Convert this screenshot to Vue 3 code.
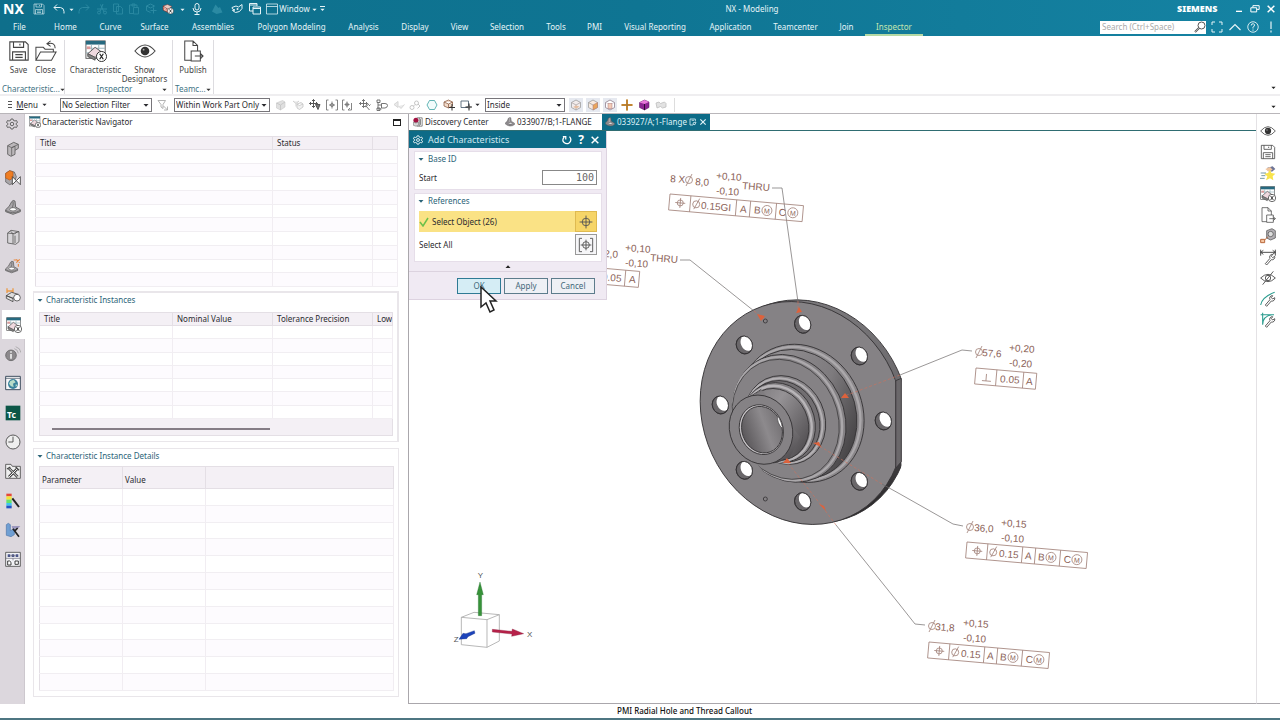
<script setup>
import { ref } from 'vue'

const menuTabs = ['File', 'Home', 'Curve', 'Surface', 'Assemblies', 'Polygon Modeling', 'Analysis', 'Display', 'View', 'Selection', 'Tools', 'PMI', 'Visual Reporting', 'Application', 'Teamcenter', 'Join', 'Inspector']

const quick = [
  { icon: 'save', label: 'Save' },
  { icon: 'undo', label: 'Undo' },
  { icon: 'caret', label: 'Undo list' },
  { icon: 'redo', label: 'Redo', off: true },
  { icon: 'cut', label: 'Cut', off: true },
  { icon: 'copy', label: 'Copy', off: true },
  { icon: 'paste', label: 'Paste', off: true },
  { icon: 'pick', label: 'Repeat', off: true },
  { icon: 'charmini', label: 'Characteristic' },
  { icon: 'caret', label: 'Recent commands' },
  { icon: 'mic', label: 'Voice command' },
  { icon: 'solid', label: 'Shape', off: true },
  { icon: 'touch', label: 'Touch mode' },
  { icon: 'cascade', label: 'Cascade' },
  { icon: 'window', label: 'Window layout' },
]

const pickTools = ['cube', 'cubesel', 'snap', 'bracket', 'bracketsnap', 'chain', 'tree', 'point', 'link', 'hex', 'boxsnap', 'rectsnap']
const pickOff = ['cube', 'cubesel', 'point', 'link']

const resources = ['block', 'constraint', 'flange', 'book', 'flangeplus', 'measure', 'char', 'info', 'globe', 'tc', 'clock', 'tools', 'rainbow', 'machine', 'process']
const rightTools = ['eye', 'save', 'star', 'char', 'publish', 'callout', 'dimwrench', 'eyeoff', 'curvewrench', 'sketchwrench']

const filter = ref('No Selection Filter')
const scope = ref('Within Work Part Only')
const inside = ref('Inside')
const start = ref('100')

const holes = [[338, 103], [508, 198], [580, 393], [508, 574], [338, 635], [163, 541], [91, 345], [163, 165]]

const frames = [
  { x: 670, y: 194, w: 134, cuts: [21, 67, 81, 107], sym: 'pos', dia: 24, texts: [[32, '0.15GI'], [71, 'A'], [85, 'B'], [110, 'C']], mods: [98, 124] },
  { x: 566, y: 265, w: 74, cuts: [21, 60], sym: 'pos', texts: [[37, '0.05'], [64, 'A']], mods: [] },
  { x: 976, y: 368, w: 61, cuts: [21, 48], sym: 'perp', texts: [[25, '0.05'], [51, 'A']], mods: [] },
  { x: 967, y: 542, w: 121, cuts: [21, 56, 69, 94], sym: 'pos', dia: 24, texts: [[33, '0.15'], [59, 'A'], [72, 'B'], [98, 'C']], mods: [85, 111] },
  { x: 929, y: 642, w: 121, cuts: [21, 56, 69, 94], sym: 'pos', dia: 24, texts: [[33, '0.15'], [59, 'A'], [72, 'B'], [98, 'C']], mods: [85, 111] },
]

const notes = [
  [670, 182, '8 X'], [695, 185, '8,0'], [716, 179, '+0,10'], [716, 194, '-0,10'], [742, 189, 'THRU'],
  [604, 257, '2,0'], [625, 251, '+0,10'], [625, 266, '-0,10'], [650, 261, 'THRU'],
  [982, 356, '57,6'], [1009, 351, '+0,20'], [1009, 366, '-0,20'],
  [974, 531, '36,0'], [1001, 526, '+0,15'], [1001, 541, '-0,10'],
  [935, 630, '31,8'], [963, 626, '+0,15'], [963, 641, '-0,10'],
]
const diameters = [[689, 180], [979, 352], [970, 527], [932, 626]]
</script>

<template>
  <div class="app">
    <svg class="defs" aria-hidden="true">
      <defs>
        <g id="wrench"><path d="M8 21L15 13a4 4 0 0 1 4-6l-2 3 2 2 3-2a4 4 0 0 1-5 5L10 23z" fill="#fff" stroke="#444" stroke-width="1.3" /></g>
        <g id="cross4"><path d="M12 4v16M4 12h16M9 7l3-3 3 3M9 17l3 3 3-3M7 9l-3 3 3 3M17 9l3 3-3 3" /></g>
        <symbol id="i-save" viewBox="0 0 24 24"><path d="M2 2h17l3 3v17H2zM6 2v6h11V2M13 4v2M5 22v-9h14v9M8 16h8M8 19h8" fill="none" stroke="currentColor" stroke-width="1.2" /></symbol>
        <symbol id="i-folder" viewBox="0 0 24 24"><path d="M1 22V8h8l2 2h9v3M1 22l5-9h17l-5 9zM22 9c0-5-3-6-8-5M17 1l-4 3 4 3" fill="none" stroke="currentColor" stroke-width="1.1" /></symbol>
        <symbol id="i-char" viewBox="0 0 24 24"><rect x="1" y="1" width="21" height="19" fill="#fff" stroke="#555" /><path d="M1 1h21v4H1z" fill="#276a80" /><path d="M1 9h21M1 14h21M7 5v15M15 5v15" stroke="#96b2bb" /><path d="M3 15l8-7 7 5-7 6z" fill="#efd9df" stroke="#555" /><path d="M3 15v3l8 4v-3z" fill="#888" stroke="#555" /><path d="M2 7h4v3H2z" fill="#d99" /><circle cx="18" cy="18" r="5.5" fill="#fff" stroke="#222" /><path d="M16 15l4 6M20 15l-4 6" stroke="#222" stroke-width="1.3" /></symbol>
        <symbol id="i-charmini" viewBox="0 0 24 24"><path d="M2 6l9-3 9 4-8 6z" fill="#e9c9c0" stroke="#733" /><path d="M2 6v8l10 5v-6z" fill="#c8563f" stroke="#733" /><path d="M3 9l9 5M3 12l9 5M6 7v9" stroke="#fff" /><circle cx="17" cy="16" r="6" fill="#fff" stroke="#222" /><path d="M15 13l4 6M19 13l-4 6" stroke="#222" stroke-width="1.6" /></symbol>
        <symbol id="i-eye" viewBox="0 0 24 24"><path d="M1 12Q12-1 23 12Q12 25 1 12z" fill="#fff" stroke="#444" stroke-width="1.2" /><circle cx="12" cy="12" r="4.7" fill="#333" /><circle cx="10.5" cy="10.5" r="1" fill="#aaa" /></symbol>
        <symbol id="i-eyeoff" viewBox="0 0 24 24"><path d="M1 12Q12 1 23 12Q12 23 1 12zM20 2L4 22" fill="none" stroke="#444" stroke-width="1.3" /><circle cx="12" cy="12" r="4" fill="none" stroke="#444" stroke-width="1.3" /></symbol>
        <symbol id="i-publish" viewBox="0 0 24 24"><path d="M10 22H3V1h9l5 5v6M12 1v5h5M10 12h10v11H10zM14 17.5h9M20 14.500l3 3-3 3" fill="none" stroke="currentColor" stroke-width="1.1" /></symbol>
        <symbol id="i-undo" viewBox="0 0 24 24"><path d="M8 3L2 9l6 6M2 9h13q7 1 7 8v4" fill="none" stroke="currentColor" stroke-width="2" /></symbol>
        <symbol id="i-redo" viewBox="0 0 24 24"><path d="M16 3l6 6-6 6M22 9H9q-7 1-7 8v4" fill="none" stroke="currentColor" stroke-width="2" /></symbol>
        <symbol id="i-caret" viewBox="0 0 24 24"><path d="M2 8h20L12 19z" fill="currentColor" /></symbol>
        <symbol id="i-cut" viewBox="0 0 24 24"><path d="M14 2L8 17M9 3l7 15M2 12h20" fill="none" stroke="currentColor" stroke-width="2" /><circle cx="6" cy="19" r="3" fill="none" stroke="currentColor" stroke-width="2" /><circle cx="18" cy="19" r="3" fill="none" stroke="currentColor" stroke-width="2" /></symbol>
        <symbol id="i-copy" viewBox="0 0 24 24"><path d="M3 2h10v15H3zM9 7h8l4 4v11H9z" fill="none" stroke="currentColor" stroke-width="1.8" /></symbol>
        <symbol id="i-paste" viewBox="0 0 24 24"><path d="M3 4h15v5M3 4v17h7M8 2h6v4H8zM11 9h10v13H11z" fill="none" stroke="currentColor" stroke-width="1.8" /></symbol>
        <symbol id="i-pick" viewBox="0 0 24 24"><path d="M3 6l8-4 8 4-8 4zM3 6v9l8 4M17 9v12M11 15h12" fill="none" stroke="currentColor" stroke-width="2" /></symbol>
        <symbol id="i-mic" viewBox="0 0 24 24"><rect x="8" y="1" width="8" height="13" rx="4" fill="none" stroke="currentColor" stroke-width="2" /><path d="M4 10q0 8 8 8t8-8M12 18v5M7 23h10" fill="none" stroke="currentColor" stroke-width="2" /></symbol>
        <symbol id="i-solid" viewBox="0 0 24 24"><path d="M2 17L9 3l6 7 3-2 5 11-12 3z" fill="currentColor" /></symbol>
        <symbol id="i-touch" viewBox="0 0 24 24"><path d="M2 9l8-3 5 2 7-5v8l-5 6-8 2-6-4 5-1-5-2z" fill="none" stroke="currentColor" stroke-width="2" /><circle cx="13" cy="12" r="2" fill="currentColor" /></symbol>
        <symbol id="i-cascade" viewBox="0 0 24 24"><path d="M8 16H1V1h15v5M8 8h15v14H8zM8 11h15M1 4h15" fill="none" stroke="currentColor" stroke-width="2" /></symbol>
        <symbol id="i-window" viewBox="0 0 24 24"><path d="M1 2h22v20H1zM1 7h22" fill="none" stroke="currentColor" stroke-width="1.5" /></symbol>
        <symbol id="i-funnel" viewBox="0 0 24 24"><path d="M2 3h15l-5 8v8l-4-3v-5zM13 14l8 8M21 15v7h-7" fill="none" stroke="#aaa" stroke-width="1.8" /></symbol>
        <symbol id="i-cube" viewBox="0 0 24 24"><path d="M3 8l12-5 5 3v10l-9 6-8-4z" fill="#ccc" stroke="#999" /><path d="M3 8l8 4 9-6M11 12v10" fill="none" stroke="#999" stroke-width="1.5" /></symbol>
        <symbol id="i-cubesel" viewBox="0 0 24 24"><path d="M2 4l6 5 6-5M8 9v6M10 10l8-3 4 3v6l-7 5-5-3zM10 10l5 3 7-3" fill="#e8e8e8" stroke="#999" stroke-width="1.5" /></symbol>
        <symbol id="i-snap" viewBox="0 0 24 24"><g fill="none" stroke="#555" stroke-width="2"><use href="#cross4" x="-3" y="-3" /><path d="M13 11h9l-4 10z" fill="#777" /></g></symbol>
        <symbol id="i-bracket" viewBox="0 0 24 24"><g fill="none" stroke="#777" stroke-width="1.8"><path d="M5 2H1v20h4M19 2h4v20h-4M12 5v14M6 12h12" /><circle cx="12" cy="12" r="3" /></g></symbol>
        <symbol id="i-bracketsnap" viewBox="0 0 24 24"><g fill="none" stroke="#777" stroke-width="1.8"><path d="M5 2H1v20h4M10 5v12M5 11h10M19 8v14h-7M16 18l-4 4" /><circle cx="10" cy="11" r="3" /></g></symbol>
        <symbol id="i-chain" viewBox="0 0 24 24"><g fill="none" stroke="#666" stroke-width="1.8"><use href="#cross4" x="-3" y="-3" /><path d="M12 16l8-6M13 13l8 9M20 14l3-3" /></g></symbol>
        <symbol id="i-tree" viewBox="0 0 24 24"><path d="M2 2h6v5H2zM4 7v13h7M4 12h7M11 9h7q5 0 5 4t-5 5h-7zM2 18h6v5H2z" fill="none" stroke="#666" stroke-width="1.8" /></symbol>
        <symbol id="i-point" viewBox="0 0 24 24"><path d="M2 11l8-6v12zM11 14l5 5 7-8" fill="#ddd" stroke="#bbb" stroke-width="2" /></symbol>
        <symbol id="i-link" viewBox="0 0 24 24"><g fill="none" stroke="#999" stroke-width="1.8"><circle cx="6" cy="17" r="4" /><circle cx="15" cy="8" r="4" /><path d="M9 14l3-3M18 10l4 4-5 5" /></g></symbol>
        <symbol id="i-hex" viewBox="0 0 24 24"><path d="M7 3h10l5 9-5 9H7l-5-9z" fill="#f2fcfc" stroke="#319c9c" stroke-width="1.5" /></symbol>
        <symbol id="i-boxsnap" viewBox="0 0 24 24"><path d="M2 6l9-4 8 4v8l-8 4-9-4zM2 6l9 4 8-4M11 10v8" fill="#f2dccb" stroke="#8a5a40" stroke-width="1.5" /><path d="M18 10v13M12 17h12" stroke="#333" stroke-width="2" /></symbol>
        <symbol id="i-rectsnap" viewBox="0 0 24 24"><path d="M2 4h15v13H2z" fill="none" stroke="#567" stroke-width="1.8" /><path d="M18 9v14M11 16h13" stroke="#222" stroke-width="2" /><circle cx="18" cy="16" r="3" fill="#555" /></symbol>
        <symbol id="i-facebox" viewBox="0 0 24 24"><path d="M3 7l9-5 9 5v10l-9 5-9-5z" fill="#f2ecec" stroke="#999" stroke-width="1.5" /><path d="M3 7l9 5 9-5M12 12v10" fill="none" stroke="#a9a1a1" stroke-width="1.5" /><path d="M6 16l6-3 7 2-6 4z" fill="#e5bda0" /></symbol>
        <symbol id="i-facebox2" viewBox="0 0 24 24"><path d="M3 7l9-5 9 5v10l-9 5-9-5zM3 7l9 5" fill="#f7e9df" stroke="#999" stroke-width="1.5" /><path d="M12 12l9-5v10l-9 5z" fill="#e9a55c" stroke="#a77" /></symbol>
        <symbol id="i-facebox3" viewBox="0 0 24 24"><path d="M3 7l9-5 9 5v10l-9 5-9-5z" fill="#fff" stroke="#8a7a8a" stroke-width="1.5" /><path d="M3 7l9 4 9-4M12 11v11" fill="none" stroke="#b5a9b5" /><path d="M8 9h8v10H8z" fill="#f3cbb8" stroke="#a77" /></symbol>
        <symbol id="i-plus" viewBox="0 0 24 24"><path d="M12 1v22M1 12h22" stroke="#e0952d" stroke-width="4" /><path d="M12 1v22M1 12h22" stroke="#654" stroke-width="1" /></symbol>
        <symbol id="i-purple" viewBox="0 0 24 24"><path d="M3 7l10-5 9 4v11l-9 5-10-5z" fill="#8d2493" stroke="#541158" /><path d="M3 7l10 3 9-4-9-4z" fill="#e77ad9" /><path d="M13 10v12" stroke="#2f0a33" stroke-width="2" /></symbol>
        <symbol id="i-faint" viewBox="0 0 24 24"><path d="M2 8l6-2 3 3 8-3 3 3v7l-7 2-4-3-7 3z" fill="#e2e2e2" stroke="#bbb" stroke-width="1.5" /></symbol>
        <symbol id="i-gear" viewBox="0 0 24 24"><path d="M10 2h4l1 3 3 1 3-1 2 4-3 2v2l3 2-2 4-3-1-3 1-1 3h-4l-1-3-3-1-3 1-2-4 3-2v-2L1 9l2-4 3 1 3-1z" fill="none" stroke="currentColor" stroke-width="2" /><circle cx="12" cy="12" r="3.5" fill="none" stroke="currentColor" stroke-width="2" /></symbol>
        <symbol id="i-block" viewBox="0 0 24 24"><path d="M4 7l9-5 7 3v6l-5 3v6l-6 3-5-3z" fill="#bbb7ba" stroke="#555" stroke-width="1.2" /><path d="M4 7l6 3 10-5M10 10v12M10 10l5-2v6" fill="none" stroke="#555" /></symbol>
        <symbol id="i-constraint" viewBox="0 0 24 24"><path d="M1 5l6-4 7 2 3 7-3 9-7 3-6-4z" fill="#a9a6a9" stroke="#555" /><path d="M1 5l6-4 5 2v9l-5 3-6-3z" fill="#ef7d22" stroke="#b5581a" /><path d="M11 10l6 6 6-6v12l-6-6-6 6z" fill="#fff" stroke="#333" stroke-width="1.2" /></symbol>
        <symbol id="i-flange" viewBox="0 0 24 24"><path d="M1 16Q7 12 10 4q2-3 5-1l1 9 7 4v3l-11 4-11-4z" fill="#aaa7aa" stroke="#555" stroke-width="1.2" /><ellipse cx="12" cy="15.5" rx="5" ry="2.500" fill="#fff" stroke="#555" /><path d="M12 4q1 4-1 9M1 17q10 7 22 0" fill="none" stroke="#555" /></symbol>
        <symbol id="i-book" viewBox="0 0 24 24"><path d="M4 6l5-4 12 2v15l-5 4-12-2zM4 6l8 1 9-3M12 7v15M8 3l4 4M14 8l4-4M15 10v11" fill="#d7d5d8" stroke="#555" stroke-width="1.2" /></symbol>
        <symbol id="i-flangeplus" viewBox="0 0 24 24"><use href="#i-flange" y="2" width="20" height="22" /><path d="M17 2l5 5M22 2l-5 5M13 3h4M20 9v4" stroke="#e8873c" stroke-width="1.6" /></symbol>
        <symbol id="i-measure" viewBox="0 0 24 24"><path d="M2 6h10M3 2v7M12 2v7" stroke="#eb9b47" stroke-width="2" /><path d="M2 13l8-5 10 3-8 6zM2 13v4l10 5v-5z" fill="#ddd" stroke="#444" stroke-width="1.2" /><circle cx="18" cy="16" r="5" fill="#fff" stroke="#444" stroke-width="1.2" /></symbol>
        <symbol id="i-info" viewBox="0 0 24 24"><circle cx="9" cy="14" r="8" fill="#8c898c" stroke="#555" /><path d="M9 12v7M9 8v2" stroke="#ddd" stroke-width="3" /><path d="M14 4q5 1 6 7M16 1q7 2 8 9" fill="none" stroke="#999" /></symbol>
        <symbol id="i-globe" viewBox="0 0 24 24"><path d="M1 2h22v20H1z" fill="#f7f7f9" stroke="#345" stroke-width="1.4" /><path d="M1 5h22" stroke="#345" /><circle cx="12" cy="13.5" r="7.5" fill="#39819b" /><path d="M8 9l5-2 3 4-4 2 1 5-4-1-3-4zM16 14l3 1-3 3z" fill="#b7dcc8" /></symbol>
        <symbol id="i-tc" viewBox="0 0 24 24"><path d="M1 1h22v22H1z" fill="#0c5647" /><text x="3" y="20" fill="#fff" font-family="Noto Sans, sans-serif" font-weight="700" font-size="13">Tc</text></symbol>
        <symbol id="i-clock" viewBox="0 0 24 24"><circle cx="12" cy="12" r="10.5" fill="#eee" stroke="#444" stroke-width="1.3" /><path d="M12 4v8H5" fill="none" stroke="#444" stroke-width="1.3" /></symbol>
        <symbol id="i-tools" viewBox="0 0 24 24"><path d="M1 2h8l2 3h12v18H1z" fill="#eee" stroke="#444" stroke-width="1.2" /><path d="M6 8l13 13M18 9L6 21" stroke="#444" stroke-width="4" /><path d="M6 8l13 13M18 9L6 21" stroke="#eee" stroke-width="1.5" /><path d="M3 9l5-3M16 6l5 5" stroke="#444" stroke-width="2" /></symbol>
        <symbol id="i-rainbow" viewBox="0 0 24 24"><path d="M2 1h8v4H2z" fill="#e5483a" /><path d="M2 5h8v5H2z" fill="#f4e43b" /><path d="M2 10h8v5H2z" fill="#67e36b" /><path d="M2 15h8v4H2z" fill="#3bc6ee" /><path d="M2 19h8v4H2z" fill="#2453c4" /><path d="M11 8l10 13" stroke="#222" stroke-width="3" /></symbol>
        <symbol id="i-machine" viewBox="0 0 24 24"><path d="M2 4l3-2 3 2v9l6-3v9l-5 3-7-2z" fill="#6f9fd3" stroke="#4f76a9" /><path d="M10 6h13l-4 4h-8z" fill="#9d98bf" /><path d="M12 10l9 12M19 9l-5 5" stroke="#222" stroke-width="2.5" /></symbol>
        <symbol id="i-process" viewBox="0 0 24 24"><path d="M1 2h22v21H1z" fill="#f3f3f6" stroke="#444" stroke-width="1.2" /><path d="M4 5h4v4H4zM10 5h4v4h-4zM16 5h4v4h-4z" fill="#4c5689" /><path d="M1 11h22M8 7h8M12 11v3" stroke="#667" /><path d="M4 15h3l2 2v4H4zM15 15h5v5h-5z" fill="#fff" stroke="#333" stroke-width="1.4" /></symbol>
        <symbol id="i-star" viewBox="0 0 24 24"><path d="M11 4l8-2 4 4-5 4-7-2z" fill="#6d7495" /><path d="M8 6l7-3 4 4-6 3z" fill="#efc5a0" /><path d="M15 7l2 5 6 1-4 4 1 6-5-3-6 3 2-6-5-4 6-1z" fill="#f8e34c" /><path d="M1 12h8M2 16h6M0 20h7" stroke="#7798a4" stroke-width="1.5" /></symbol>
        <symbol id="i-callout" viewBox="0 0 24 24"><path d="M10 4l8-3 5 3v11l-7 3-6-3z" fill="#b3b0b5" stroke="#444" /><circle cx="16" cy="9" r="4" fill="#ddd" stroke="#444" /><path d="M1 17h6v5H1zM7 18l5-5" fill="#f5c7a3" stroke="#b8683c" stroke-width="1.5" /></symbol>
        <symbol id="i-dimwrench" viewBox="0 0 24 24"><path d="M1 1v9M23 1v9M1 5h22M5 2L1 5l4 3M19 2l4 3-4 3" fill="none" stroke="#444" stroke-width="1.4" /><use href="#wrench" y="1" /></symbol>
        <symbol id="i-curvewrench" viewBox="0 0 24 24"><path d="M1 21Q3 9 22 2" fill="none" stroke="#2a9c8e" stroke-width="1.6" /><use href="#wrench" /></symbol>
        <symbol id="i-sketchwrench" viewBox="0 0 24 24"><path d="M4 1v18M1 4h20M4 19Q4 6 18 4" fill="none" stroke="#2a9c8e" stroke-width="1.6" /><use href="#wrench" /></symbol>
        <symbol id="i-target" viewBox="0 0 24 24"><circle cx="12" cy="12" r="6.5" fill="none" stroke="#555" stroke-width="1.6" /><path d="M12 1v22M1 12h22" stroke="#555" stroke-width="1.6" /></symbol>
        <symbol id="i-targetall" viewBox="0 0 24 24"><path d="M6 2H2v20h4M18 2h4v20h-4" fill="none" stroke="#555" stroke-width="1.4" /><circle cx="12" cy="12" r="5" fill="none" stroke="#555" stroke-width="1.4" /><path d="M12 4v16M4 12h16" stroke="#555" stroke-width="1.4" /></symbol>
        <symbol id="i-part" viewBox="0 0 24 24"><path d="M1 14Q6 12 8 3q4-3 6-1l1 8 8 5v3q-10 8-22-1z" fill="#8e8a8e" stroke="#555" /><ellipse cx="13" cy="15" rx="5" ry="2" fill="#fff" stroke="#555" /><path d="M11 3q1 5-1 9" fill="none" stroke="#ddd" /></symbol>
        <symbol id="i-discovery" viewBox="0 0 24 24"><path d="M9 2h13v20H9M15 2v20M18 5v14" fill="#fff" stroke="#444" stroke-width="1.5" /><circle cx="7" cy="8" r="6" fill="#a31342" /><path d="M1 12q6 5 12 0v8q-6 4-12 0z" fill="#d8d8d8" stroke="#444" /></symbol>
        <symbol id="i-edit" viewBox="0 0 24 24"><path d="M12 21H3V3h16v6M8 7h7M12 19l1-5 8-2-3 8z" fill="none" stroke="currentColor" stroke-width="2.4" /></symbol>
        <symbol id="i-close" viewBox="0 0 24 24"><path d="M4 4l16 16M20 4L4 20" stroke="currentColor" stroke-width="3.5" /></symbol>
        <symbol id="i-reset" viewBox="0 0 24 24"><path d="M5 5q-6 8 0 13t12 1q8-7 1-15M2 4h7v7" fill="none" stroke="currentColor" stroke-width="3" /></symbol>
        <symbol id="i-restore" viewBox="0 0 24 24"><path d="M7 8V4h15v9h-5M2 9h14v10H2z" fill="none" stroke="currentColor" stroke-width="2.4" /></symbol>
        <symbol id="i-min" viewBox="0 0 24 24"><path d="M3 19h18" stroke="currentColor" stroke-width="4" /></symbol>
        <symbol id="i-full" viewBox="0 0 24 24"><path d="M2 8V2h6M16 2h6v6M22 16v6h-6M8 22H2v-6" fill="none" stroke="currentColor" stroke-width="2" /></symbol>
        <symbol id="i-up" viewBox="0 0 24 24"><path d="M1 18L12 7l11 11" fill="none" stroke="currentColor" stroke-width="2.4" /></symbol>
        <symbol id="i-help" viewBox="0 0 24 24"><circle cx="12" cy="12" r="10.5" fill="none" stroke="currentColor" stroke-width="1.8" /><path d="M8.5 9q0-4 4-3.500 4 1 2 4.500l-2.500 2.500V15M12 17v2.500" fill="none" stroke="currentColor" stroke-width="2" /></symbol>
        <symbol id="i-bang" viewBox="0 0 24 24"><path d="M12 1v15M12 19v4" stroke="currentColor" stroke-width="2.4" /></symbol>
        <symbol id="i-search" viewBox="0 0 24 24"><circle cx="15" cy="9" r="7" fill="#fff" stroke="#555" stroke-width="2" /><path d="M10 14l-8 8" stroke="#555" stroke-width="4" /><path d="M10 14l-8 8" stroke="#fff" stroke-width="1" /></symbol>
      </defs>
    </svg>

    <header class="header">
      <div class="titlebar">
        <div class="quick">
          <strong class="nx">NX</strong>
          <button v-for="q in quick" :key="q.label" type="button" :class="{ off: q.off }" :aria-label="q.label">
            <svg :class="q.icon === 'caret' ? 'ic5' : 'ic12'"><use :href="'#i-' + q.icon" /></svg>
          </button>
          <button type="button" class="windowmenu">Window</button>
          <button type="button" aria-label="Window list"><svg class="ic5"><use href="#i-caret" /></svg></button>
          <button type="button" class="more" aria-label="Toolbar options"><svg class="ic5"><use href="#i-caret" /></svg></button>
        </div>
        <div class="apptitle">NX - Modeling</div>
        <div class="wincontrols">
          <strong class="siemens">SIEMENS</strong>
          <button type="button" aria-label="Minimize"><svg class="ic8"><use href="#i-min" /></svg></button>
          <button type="button" aria-label="Restore"><svg class="ic10"><use href="#i-restore" /></svg></button>
          <button type="button" aria-label="Close window"><svg class="ic10"><use href="#i-close" /></svg></button>
        </div>
      </div>
      <div class="menubar">
        <nav class="tabs">
          <button v-for="t in menuTabs" :key="t" type="button" :class="{ on: t === 'Inspector' }">{{ t }}</button>
        </nav>
        <div class="search">
          <input type="text" aria-label="Search" placeholder="Search (Ctrl+Space)">
          <svg class="ic12"><use href="#i-search" /></svg>
        </div>
        <div class="helpers">
          <button type="button" aria-label="Full screen"><svg class="ic12"><use href="#i-full" /></svg></button>
          <button type="button" aria-label="Collapse ribbon"><svg class="ic12"><use href="#i-up" /></svg></button>
          <button type="button" aria-label="Help"><svg class="ic12"><use href="#i-help" /></svg></button>
          <button type="button" aria-label="Alerts"><svg class="ic12"><use href="#i-bang" /></svg></button>
        </div>
      </div>
    </header>

    <section class="ribbon" aria-label="Inspector ribbon">
      <div class="group g1">
        <div class="tools">
          <button type="button"><svg class="ic22"><use href="#i-save" /></svg>Save</button>
          <button type="button"><svg class="ic22"><use href="#i-folder" /></svg>Close</button>
        </div>
        <div class="glabel"><span>Characteristic...</span><svg class="ic5"><use href="#i-caret" /></svg></div>
      </div>
      <div class="group g2">
        <div class="tools">
          <button type="button"><svg class="ic22"><use href="#i-char" /></svg>Characteristic</button>
          <button type="button"><svg class="ic22"><use href="#i-eye" /></svg>Show<br>Designators</button>
        </div>
        <div class="glabel"><span>Inspector</span><svg class="ic5"><use href="#i-caret" /></svg></div>
      </div>
      <div class="group g3">
        <div class="tools">
          <button type="button"><svg class="ic22"><use href="#i-publish" /></svg>Publish</button>
        </div>
        <div class="glabel"><span>Teamc...</span><svg class="ic5"><use href="#i-caret" /></svg></div>
      </div>
      <svg class="ic5 endcaret"><use href="#i-caret" /></svg>
    </section>

    <section class="selbar" aria-label="Selection bar">
      <button type="button" class="menu"><span class="bars"></span><span><u>M</u>enu</span><svg class="ic5"><use href="#i-caret" /></svg></button>
      <div class="combo c1"><select v-model="filter" aria-label="Selection filter"><option>No Selection Filter</option></select><svg class="ic6"><use href="#i-caret" /></svg></div>
      <button type="button" class="funnel" aria-label="Filter"><svg class="ic12"><use href="#i-funnel" /></svg></button>
      <div class="combo c2"><select v-model="scope" aria-label="Selection scope"><option>Within Work Part Only</option></select><svg class="ic6"><use href="#i-caret" /></svg></div>
      <div class="picks">
        <button v-for="p in pickTools" :key="p" type="button" :aria-label="p" :class="{ dim: pickOff.includes(p) }"><svg class="ic12"><use :href="'#i-' + p" /></svg></button>
      </div>
      <svg class="ic5 pickcaret"><use href="#i-caret" /></svg>
      <div class="combo c3"><select v-model="inside" aria-label="Selection mode"><option>Inside</option></select><svg class="ic6"><use href="#i-caret" /></svg></div>
      <div class="modes">
        <button v-for="(m, i) in ['facebox', 'facebox2', 'facebox3', 'plus', 'purple', 'faint']" :key="m" type="button" :aria-label="m" :class="{ on: i < 3 }"><svg class="ic12"><use :href="'#i-' + m" /></svg></button>
      </div>
      <svg class="ic5 endcaret"><use href="#i-caret" /></svg>
    </section>

    <main class="main">
      <aside class="resources">
        <button type="button" class="gear" aria-label="Settings"><svg class="ic12"><use href="#i-gear" /></svg></button>
        <div class="resgrid">
          <button v-for="r in resources" :key="r" type="button" :aria-label="r" :class="{ on: r === 'char' }"><svg class="ic16"><use :href="'#i-' + r" /></svg></button>
        </div>
      </aside>

      <section class="navigator">
        <h2 class="navtitle"><svg class="ic12"><use href="#i-char" /></svg><span>Characteristic Navigator</span>
          <button type="button" class="maxi" aria-label="Maximize"></button>
        </h2>
        <table class="grid t1">
          <colgroup><col class="first"><col class="w100"><col class="last"></colgroup>
          <thead><tr><th>Title</th><th>Status</th><th></th></tr></thead>
          <tbody><tr v-for="n in 10" :key="n"><td></td><td></td><td></td></tr></tbody>
        </table>

        <div class="card c-inst">
          <h3><svg class="ic6"><use href="#i-caret" /></svg>Characteristic Instances</h3>
          <table class="grid t2">
            <colgroup><col class="first"><col class="w100"><col class="w100"><col class="last"></colgroup>
            <thead><tr><th>Title</th><th>Nominal Value</th><th>Tolerance Precision</th><th>Low</th></tr></thead>
            <tbody><tr v-for="n in 7" :key="n"><td></td><td></td><td></td><td></td></tr></tbody>
          </table>
          <div class="scroll"><div class="thumb"></div></div>
        </div>

        <div class="card c-det">
          <h3><svg class="ic6"><use href="#i-caret" /></svg>Characteristic Instance Details</h3>
          <table class="grid t3">
            <colgroup><col class="p"><col class="v"><col></colgroup>
            <thead><tr><th>Parameter</th><th>Value</th><th></th></tr></thead>
            <tbody><tr v-for="n in 12" :key="n"><td></td><td></td><td></td></tr></tbody>
          </table>
        </div>
      </section>

      <section class="work">
        <div class="doctabs">
          <button type="button" class="d1"><svg class="ic10"><use href="#i-discovery" /></svg>Discovery Center</button>
          <button type="button" class="d2"><svg class="ic10"><use href="#i-part" /></svg>033907/B;1-FLANGE</button>
          <button type="button" class="d3 on"><svg class="ic10"><use href="#i-part" /></svg>033927/A;1-Flange<svg class="ic8"><use href="#i-edit" /></svg><svg class="ic8"><use href="#i-close" /></svg></button>
        </div>
        <div class="canvas">
          <svg class="scene" viewBox="409 131 848 572" preserveAspectRatio="xMinYMin meet" role="img" aria-label="Flange model">
            <defs>
              <linearGradient id="bore" x1="0" y1="0" x2="1" y2="0"><stop offset="0" stop-color="#5b585b" /><stop offset=".6" stop-color="#8d8a8d" /><stop offset="1" stop-color="#757275" /></linearGradient>
              <linearGradient id="tube" gradientUnits="userSpaceOnUse" x1="200" y1="300" x2="330" y2="510"><stop offset="0" stop-color="#7b787b" /><stop offset=".35" stop-color="#959295" /><stop offset=".7" stop-color="#6d6a6d" /><stop offset="1" stop-color="#4b484b" /></linearGradient>
              <linearGradient id="cyl" x1="0" y1="0" x2=".8" y2="1"><stop offset="0" stop-color="#777477" /><stop offset=".3" stop-color="#8f8c8f" /><stop offset=".65" stop-color="#7e7b7e" /><stop offset="1" stop-color="#3c3a3c" /></linearGradient>
              <linearGradient id="side" x1="0" y1="0" x2="0" y2="1"><stop offset="0" stop-color="#7d7b7e" /><stop offset=".6" stop-color="#6b696c" /><stop offset="1" stop-color="#2c2a2c" /></linearGradient>
              <clipPath id="backclip"><path d="M0 0H634V720H0z" /></clipPath>
              <clipPath id="frontclip"><path d="M0 0H617V720H0z" /></clipPath>
              <clipPath id="holeclip"><ellipse rx="24" ry="27" transform="rotate(-20)" /></clipPath>
              <clipPath id="boreclip"><ellipse cx="216" cy="419" rx="60" ry="71" transform="rotate(-20 216 419)" /></clipPath>
            </defs>
            <g transform="translate(690 290) scale(.33333)" stroke="#353335" stroke-width="2.5">
              <g clip-path="url(#backclip)"><ellipse cx="353" cy="364" rx="297" ry="342" transform="rotate(-25 353 364)" fill="url(#side)" /></g>
              <path d="M617 272l17-7v250l-17 20z" fill="#6b686b" />
              <g clip-path="url(#frontclip)"><ellipse cx="336" cy="369" rx="297" ry="342" transform="rotate(-25 336 369)" fill="#858285" /></g>
              <path d="M617 272V532" fill="none" />
              <g v-for="h in holes" :key="h.join()" :transform="`translate(${h[0]} ${h[1]})`">
                <ellipse rx="24" ry="27" transform="rotate(-20)" fill="#6a676a" />
                <g clip-path="url(#holeclip)"><ellipse cx="10" cy="-3" rx="19" ry="24" transform="rotate(-20)" fill="#fff" stroke="none" /></g>
                <ellipse rx="24" ry="27" transform="rotate(-20)" fill="none" />
              </g>
              <g fill="none"><circle cx="226" cy="93" r="6" /><circle cx="226" cy="627" r="6" /></g>
              <ellipse cx="333" cy="370" rx="184" ry="212" transform="rotate(-25 333 370)" fill="#8b888b" />
              <ellipse cx="328" cy="371" rx="178" ry="204" transform="rotate(-25 328 371)" fill="none" stroke="#aba8ab" stroke-width="7" />
              <ellipse cx="323" cy="373" rx="173" ry="199" transform="rotate(-25 323 373)" fill="url(#cyl)" />
              <ellipse cx="297" cy="385" rx="165" ry="197" transform="rotate(-25 297 385)" fill="#858285" />
              <ellipse cx="292" cy="386" rx="158" ry="190" transform="rotate(-25 292 386)" fill="none" stroke="#aba8ab" stroke-width="7" />
              <ellipse cx="287" cy="388" rx="155" ry="185" transform="rotate(-25 287 388)" fill="#858285" stroke-width="2" />
              <path d="M138 300Q118 370 158 464l60 80-20 0Q120 440 131 340z" fill="#858285" stroke="none" />
              <ellipse cx="285" cy="390" rx="119" ry="136" transform="rotate(-25 285 390)" fill="#8a878a" />
              <ellipse cx="281" cy="392" rx="113" ry="130" transform="rotate(-25 281 392)" fill="none" stroke="#b3b0b3" stroke-width="6" />
              <ellipse cx="278" cy="394" rx="109" ry="125" transform="rotate(-25 278 394)" fill="#716e71" />
              <ellipse cx="268" cy="397" rx="105" ry="122" transform="rotate(-25 268 397)" fill="#858285" />
              <ellipse cx="263" cy="400" rx="99" ry="115" transform="rotate(-25 263 400)" fill="none" stroke="#b8b5b8" stroke-width="7" />
              <ellipse cx="259" cy="403" rx="95" ry="110" transform="rotate(-25 259 403)" fill="url(#tube)" />
              <path d="M177 323L216 300 330 440 300 502 250 519z" fill="url(#tube)" stroke="none" />
              <path d="M180 320l34-22M250 519l38-11" />
              <ellipse cx="213" cy="419" rx="93" ry="106" transform="rotate(-25 213 419)" fill="#858285" />
              <ellipse cx="214" cy="419" rx="65" ry="76" transform="rotate(-20 214 419)" fill="#c2bfc2" />
              <ellipse cx="216" cy="419" rx="60" ry="71" transform="rotate(-20 216 419)" fill="url(#bore)" />
              <g clip-path="url(#boreclip)"><ellipse cx="284" cy="391" rx="20" ry="31" transform="rotate(-20 284 391)" fill="#fff" stroke-width="1.5" /></g>
            </g>
            <g fill="none" stroke="#6e6a6a" stroke-width=".7">
              <path d="M772 188h10l16 114M680 260h10l64 51M972 351l-10-1-62 25M963 526l-10-2-53-30-18-10M925 625l-10-1-15-19-64-80" />
            </g>
            <g fill="none" stroke="#d0705a" stroke-width=".6" stroke-dasharray="3 2"><path d="M798 301v12M754 311l11 9M900 375l-58 22M882 484l-66-40M836 525l-15-20-34-43" /></g>
            <g fill="#dd623c"><path d="M796 313l3-6 3 5zM757 314l8 2-4 5zM841 398l4-5 4 5zM813 443l6-1 2 5zM783 463l4-5 4 5zM819 504l5 2 2 5z" /></g>

            <g class="pmi">
              <text v-for="n in notes" :key="n.join()" :transform="`translate(${n[0]} ${n[1]}) rotate(4)`">{{ n[2] }}</text>
              <g v-for="d in diameters" :key="d.join()" class="ln"><circle :cx="d[0]" :cy="d[1]" r="3.5" /><path :d="`M${d[0] - 3} ${d[1] + 6}l6-12`" /></g>
              <g v-for="f in frames" :key="f.x" :transform="`translate(${f.x} ${f.y}) rotate(5)`">
                <g class="ln">
                  <rect :width="f.w" height="16" />
                  <path v-for="c in f.cuts" :key="c" :d="`M${c} 0v16`" />
                  <template v-if="f.sym === 'pos'"><circle cx="11" cy="8" r="3" /><path d="M11 3v10M6 8h10" /></template>
                  <path v-else d="M7 12h9M11 5v7" />
                  <template v-if="f.dia"><circle cx="27" cy="8" r="3.5" /><path d="M25 13l5-11" /></template>
                </g>
                <text v-for="t in f.texts" :key="t[0]" :x="t[0]" y="12">{{ t[1] }}</text>
                <g v-for="m in f.mods" :key="m" class="ln"><circle :cx="m" cy="8" r="5" /><text class="mod" :x="m" y="11">M</text></g>
              </g>
            </g>

            <g transform="translate(400 560) scale(.33333)">
              <path d="M184 172l38-15 76 7-37 15zM184 172v82l77 8v-83M261 262l37-19v-79" fill="#fff" stroke="#aaa" stroke-width="2.5" />
              <path d="M235 167v-63h-5l10-38 10 38h-5v63z" fill="#379239" stroke="#1e6b2b" />
              <path d="M277 208l59 6 1-7 34 14-36 8 1-7-59-6z" fill="#b72149" stroke="#7f1533" />
              <path d="M223 212l2 8-21 10-4 6-23 2 12-18 9 1z" fill="#1c43ba" stroke="#122b80" />
              <g class="axis"><text x="233" y="54">Y</text><text x="381" y="232">X</text><text x="161" y="246">Z</text></g>
            </g>
          </svg>

          <form class="dialog" aria-label="Add Characteristics" @submit.prevent>
            <div class="dhead">
              <svg class="ic10"><use href="#i-gear" /></svg><span>Add Characteristics</span>
              <button type="button" aria-label="Reset"><svg class="ic10"><use href="#i-reset" /></svg></button>
              <button type="button" aria-label="Dialog help" class="q">?</button>
              <button type="button" aria-label="Close dialog"><svg class="ic10"><use href="#i-close" /></svg></button>
            </div>
            <div class="dbody">
              <fieldset class="box b1">
                <h4><svg class="ic6"><use href="#i-caret" /></svg>Base ID</h4>
                <div class="row"><label for="start">Start</label><input id="start" v-model="start" type="text"></div>
              </fieldset>
              <fieldset class="box b2">
                <h4><svg class="ic6"><use href="#i-caret" /></svg>References</h4>
                <div class="row picked">
                  <svg class="ic10"><path d="M1 5l3 4 5-8" fill="none" stroke="#6cc04a" stroke-width="1.5" /></svg>
                  <span>Select Object (26)</span>
                  <button type="button" aria-label="Select Object"><svg class="ic14"><use href="#i-target" /></svg></button>
                </div>
                <div class="row all"><span>Select All</span><button type="button" aria-label="Select All"><svg class="ic16"><use href="#i-targetall" /></svg></button></div>
              </fieldset>
              <button type="button" class="fold" aria-label="Collapse"><svg class="ic6"><use href="#i-caret" /></svg></button>
            </div>
            <div class="dfoot">
              <button type="submit" class="ok">OK</button>
              <button type="button">Apply</button>
              <button type="button">Cancel</button>
            </div>
            <svg class="cursor" viewBox="0 0 18 28"><path d="M1 1v20l5-4 4 9 4-2-4-9h6z" fill="#fff" stroke="#222" stroke-width="1.5" /></svg>
          </form>
        </div>
      </section>

      <aside class="righttools">
        <button v-for="r in rightTools" :key="r" type="button" :aria-label="r"><svg class="ic16"><use :href="'#i-' + r" /></svg></button>
      </aside>
    </main>

    <footer class="status">PMI Radial Hole and Thread Callout</footer>
  </div>
</template>

<style>
body { background: #fff; }
</style>

<style scoped>
.app {
  --teal: #0d6b87;
  --line: #e4dfe5;
  --soft: #f4f0f5;
  display: flex;
  flex-direction: column;
  min-height: 100vh;
  box-sizing: border-box;
  border-bottom: 2px solid #4d7682;
  font: 8px/10px "Noto Sans", "Open Sans", sans-serif;
  color: #2b2b2f;
}
.app *, .app *::before, .app *::after { box-sizing: border-box; }
.defs { position: absolute; width: 0; height: 0; }
svg { display: block; flex: none; }
button { font: inherit; color: inherit; background: none; border: 0; padding: 0; margin: 0; display: flex; align-items: center; justify-content: center; white-space: nowrap; }
h2, h3, h4, fieldset { margin: 0; padding: 0; border: 0; font: inherit; min-width: 0; }
.ic5 { width: 5px; height: 5px; }
.ic6 { width: 6px; height: 6px; }
.ic8 { width: 8px; height: 8px; }
.ic10 { width: 10px; height: 10px; }
.ic12 { width: 12px; height: 12px; }
.ic14 { width: 14px; height: 14px; }
.ic16 { width: 16px; height: 16px; }
.ic22 { width: 22px; height: 22px; }

.header { background: linear-gradient(90deg, #0e6f8b, #0f7593 50%, #1583a3); color: #e6f4f7; }
.titlebar { display: grid; grid-template-columns: 327px 1fr 103px; height: 18px; align-items: center; }
.quick { display: grid; grid-template-columns: 27px 24px 16px 8px 18px 17px 16px 16px 17px 18px 10px 20px 20px 19px 18px 15px 31px 8px 9px; align-items: center; justify-items: center; }
.nx { font-size: 14px; font-weight: 700; color: #fff; line-height: 16px; }
.off { color: #2b8aa3; }
.more { border-top: 1px solid #e6f4f7; }
.apptitle { text-align: center; }
.wincontrols { display: grid; grid-template-columns: 53px 18px 14px 18px; align-items: center; color: #fff; }
.siemens { font-size: 9px; font-weight: 900; }
.menubar { display: flex; align-items: center; height: 18px; }
.tabs { display: grid; grid-template-columns: 39px 53px 37px 51px 66px 91px 53px 50px 39px 56px 42px 35px 86px 65px 65px 37px 58px; height: 18px; }
.tabs button { border-bottom: 2px solid transparent; padding-top: 1px; }
.tabs .on { color: #c5e6b0; border-bottom-color: #b4d9a4; }
.search { margin-left: auto; width: 106px; height: 13px; background: #fff; display: flex; align-items: center; }
.search input { flex: 1; min-width: 0; border: 0; padding: 0 2px; background: none; font: inherit; color: #555; outline: 0; }
.search input::placeholder { color: #aaa; }
.helpers { display: grid; grid-template-columns: repeat(4, 18px); margin-left: 2px; }

.ribbon { display: flex; height: 60px; border-bottom: 2px solid #efeef0; padding-top: 4px; color: #444; }
.group { display: flex; flex-direction: column; justify-content: space-between; border-right: 1px solid #dddce0; height: 54px; }
.g1 { width: 65px; }
.g2 { width: 108px; }
.g3 { width: 41px; }
.tools { display: flex; line-height: 9px; }
.tools button { flex-direction: column; justify-content: flex-start; gap: 3px; white-space: normal; text-align: center; }
.g1 .tools { padding-left: 5px; }
.g1 .tools button { width: 27px; }
.g2 .tools { padding-left: 6px; }
.g2 .tools button { width: 49px; }
.g3 .tools button { width: 40px; }
.glabel { display: flex; align-items: center; color: #3f7383; padding: 0 5px 0 2px; }
.glabel span { flex: 1; text-align: center; }
.g1 .glabel { padding-right: 1px; }
.g1 .glabel span, .g3 .glabel span { text-align: left; }
.glabel svg { color: #333; }
.endcaret { color: #222; align-self: flex-end; margin: 0 4px 4px auto; }

.selbar { display: flex; align-items: center; height: 18px; border-bottom: 1px solid #b9b6ba; }
.menu { width: 39px; margin-left: 8px; gap: 4px; }
.bars { width: 8px; height: 7px; border-top: 1px solid #555; border-bottom: 1px solid #555; background: linear-gradient(#555, #555) center / 100% 1px no-repeat; }
.combo { height: 14px; border: 1px solid #77757a; display: grid; align-items: center; background: #fff; }
.combo select { grid-area: 1 / 1; width: 100%; height: 12px; appearance: none; border: 0; background: none; font: inherit; color: inherit; padding: 0 0 0 1px; outline: 0; }
.combo svg { grid-area: 1 / 1; justify-self: end; margin-right: 2px; pointer-events: none; }
.c1 { width: 92px; margin-left: 13px; }
.funnel { width: 22px; }
.c2 { width: 96px; }
.picks { width: 201px; margin-left: 3px; display: flex; }
.picks button { flex: 1; }
.dim { opacity: .6; }
.pickcaret { margin: 0 5px 0 1px; }
.c3 { width: 80px; }
.modes { display: flex; gap: 3px; margin-left: 4px; padding-right: 6px; border-right: 1px solid #ddd; }
.modes button { width: 14px; height: 14px; }
.modes .on { background: #e6e9f0; }

.main { flex: 1; display: flex; min-height: 0; }
.resources { width: 25px; background: #dcd7dd; color: #666; display: flex; flex-direction: column; border-right: 1px solid #cdc8ce; }
.gear { height: 20px; }
.resgrid { display: grid; grid-template-rows: repeat(15, 1fr); height: 440px; }
.resgrid button { margin-left: 2px; }
.resgrid .on { background: #fff; margin-right: -1px; }

.navigator { width: 384px; border-right: 1px solid #aaa7ac; padding: 0 9px 7px 8px; display: flex; flex-direction: column; }
.navtitle { display: flex; align-items: center; height: 16px; gap: 1px; padding-left: 1px; margin-left: -5px; margin-bottom: 6px; }
.maxi { width: 8px; height: 7px; border: 1px solid #222; border-top-width: 2px; margin: 0 -2px 0 auto; }
.grid { border-collapse: collapse; table-layout: fixed; width: 100%; border: 1px solid var(--line); }
.grid th { font-weight: 400; text-align: left; background: var(--soft); padding: 0 4px; border-right: 1px solid var(--line); border-bottom: 1px solid var(--line); height: 13px; line-height: 10px; white-space: nowrap; overflow: hidden; }
.grid td { padding: 0; border-right: 1px solid #f1edf2; border-bottom: 1px solid #f1eef2; }
.grid tbody tr:nth-child(even) { background: #fdfbfe; }
.w100 { width: 100px; }
.t1 { width: 363px; margin-left: 2px; height: 151px; }
.t1 .last { width: 25px; }
.card { border: 1px solid #e9e6ea; padding: 0 4px 5px 5px; }
.c-inst { margin-top: 4px; border-width: 2px 2px 1px 1px; }
.c-det { margin-top: 6px; flex: 1; display: flex; flex-direction: column; }
.card h3 { color: #2c6478; display: flex; align-items: center; gap: 3px; height: 14px; margin-left: -2px; }
.t2 { height: 107px; margin-top: 5px; }
.t2 .last { width: 20px; }
.grid.t2 th:last-child { padding-right: 0; }
.scroll { background: var(--soft); height: 17px; padding: 9px 0 0 12px; border: 1px solid var(--line); border-top: 0; }
.thumb { width: 64%; height: 2px; background: #857d86; }
.t3 { margin-top: 3px; flex: 1; height: 225px; }
.t3 .p { width: 83px; }
.t3 .v { width: 83px; }
.grid.t3 th { height: 22px; padding: 5px 2px 0; }
.t3 td { height: 16px; }

.work { flex: 1; display: flex; flex-direction: column; min-width: 0; }
.doctabs { display: flex; height: 17px; border-bottom: 1px solid #2f6d72; }
.doctabs button { justify-content: flex-start; gap: 2px; }
.doctabs .d1 { width: 81px; padding-left: 4px; }
.doctabs .d2 { width: 112px; padding-left: 15px; }
.doctabs .d3 { width: 108px; padding-left: 3px; }
.doctabs .on { background: var(--teal); color: #dff2f7; }
.canvas { flex: 1; position: relative; overflow: hidden; min-height: 572px; border-bottom: 1px solid #aaa7ac; }
.scene { position: absolute; top: 0; left: 0; width: 848px; height: 572px; }
.pmi text { font: 10px "Liberation Sans", Arial, sans-serif; fill: #8b6257; }
.pmi .mod { font-size: 7px; text-anchor: middle; }
.ln circle, .ln rect, .ln path { fill: none; stroke: #a07f76; stroke-width: .8; }
.axis text { font: 24px "Liberation Sans", Arial, sans-serif; fill: #555; }

.dialog { position: absolute; top: 0; left: 0; width: 198px; background: #f0eaf3; border-right: 1px solid #ddd3e0; border-bottom: 1px solid #ddd3e0; }
.dhead { display: flex; align-items: center; height: 17px; padding: 0 4px; background: var(--teal); color: #fff; font-size: 9px; }
.dhead span { flex: 1; padding-left: 5px; color: #cfe7ef; }
.dhead button { width: 14px; }
.q { font-size: 12px; font-weight: 700; }
.dbody { padding: 3px 4px 0 5px; }
.box { background: #fff; border: 1px solid #e6dee9; padding: 0 4px; margin-bottom: 3px; }
.box h4 { color: #2c6478; display: flex; align-items: center; gap: 4px; height: 13px; margin-left: -1px; }
.row { display: flex; align-items: center; justify-content: space-between; }
.b1 { height: 39px; }
.b1 .row { height: 25px; }
.b1 input { width: 55px; height: 15px; border: 1px solid #888; text-align: right; font: 10px "DejaVu Sans Mono", monospace; color: #666; padding: 0 2px; }
.b2 { height: 69px; margin-bottom: 0; }
.picked { background: #fae285; height: 21px; margin-top: 4px; }
.picked span { flex: 1; padding-left: 3px; }
.picked button { width: 22px; height: 21px; background: #f6d568; border: 1px solid #dfba50; }
.all { height: 25px; }
.all button { width: 22px; height: 21px; border: 1px solid #999; background: #f6f6f8; }
.fold { width: 100%; height: 9px; color: #222; }
.fold svg { rotate: 180deg; }
.dfoot { display: flex; justify-content: flex-end; gap: 3px; padding: 6px 11px 5px; border-top: 1px solid #dcd3df; }
.dfoot button { width: 44px; height: 16px; border: 1px solid #5d7c8c; background: #eef0f5; color: #42687a; }
.dfoot .ok { background: #d5edf5; border-color: #2e7a94; }
.cursor { position: absolute; left: 71px; top: 155px; width: 18px; height: 28px; }

.righttools { width: 24px; border-left: 1px solid #e4e2e5; border-bottom: 1px solid #aaa7ac; color: #444; padding-top: 6px; }
.righttools button { width: 22px; height: 21px; }
.status { height: 14px; display: flex; align-items: center; justify-content: center; padding-left: 89px; font-weight: 500; color: #111; }
</style>
